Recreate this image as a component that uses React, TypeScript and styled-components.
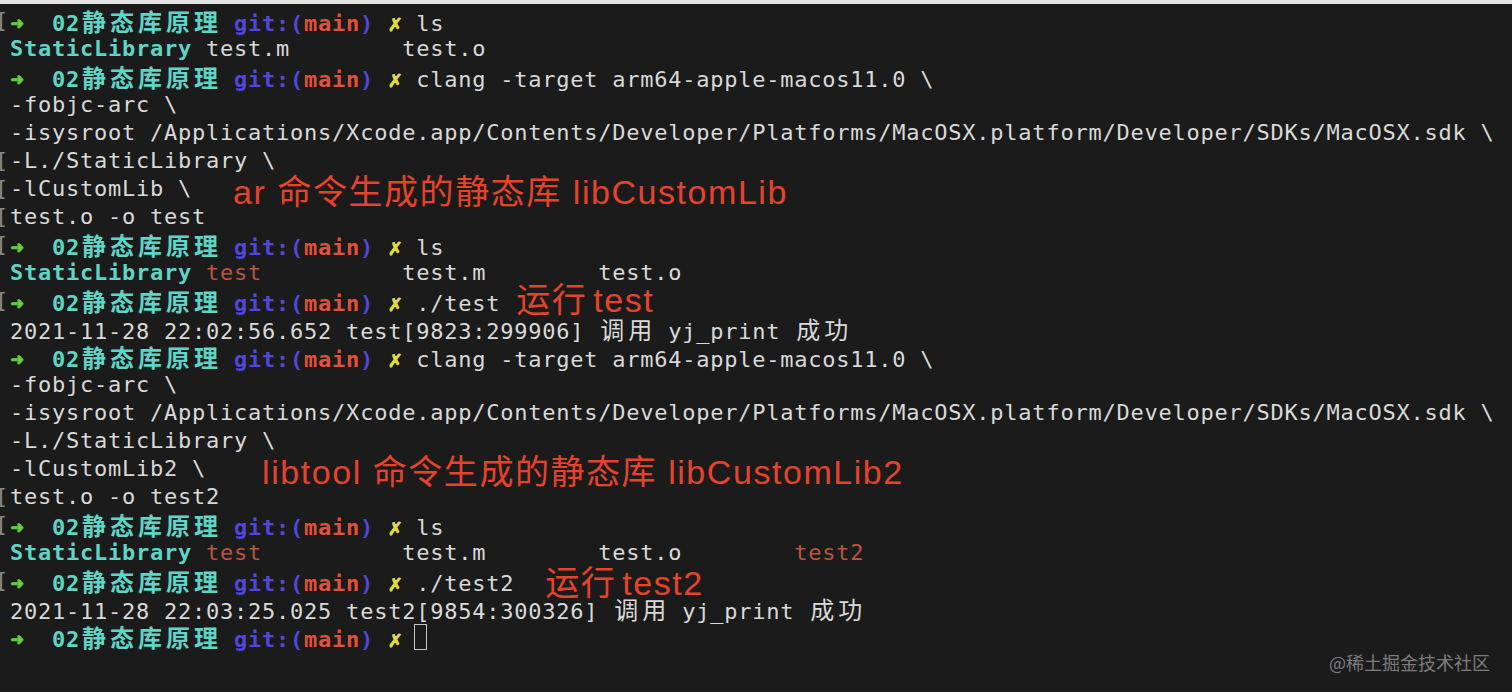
import React from "react";
import styled, { createGlobalStyle } from "styled-components";

type Tone = "arrow" | "dir" | "git" | "branch" | "dirty" | "cmd" | "exec";

interface Seg {
  text: string;
  tone?: Tone;
}

interface Note {
  text: string;
  gap: number;
  shift: number;
  tight?: boolean;
}

interface Line {
  mark?: boolean;
  segs: Seg[];
  note?: Note;
  cursor?: boolean;
}

const tones: Record<Tone, string> = {
  arrow: "#62cf3e",
  dir: "#5ed5c6",
  git: "#5048db",
  branch: "#e2503a",
  dirty: "#e2de3e",
  cmd: "#d9d9d9",
  exec: "#b9553f",
};

const heavy: Tone[] = ["arrow", "dir", "git", "branch", "dirty"];

const GlobalStyle = createGlobalStyle`
  html, body {
    margin: 0;
    padding: 0;
    background: #1b1b1b;
  }
`;

const Screen = styled.div`
  position: relative;
  height: 692px;
  box-sizing: border-box;
  overflow: hidden;
  background: #1b1b1b;
  border-top: 4px solid #e3e3e3;
  padding-top: 3px;
`;

const Terminal = styled.div`
  display: flex;
  flex-direction: column;
  font-family: "DejaVu Sans Mono", "Liberation Mono", monospace;
  font-size: 22px;
  letter-spacing: 0.76px;
  color: #d9d9d9;
`;

const Row = styled.div`
  height: 28px;
  line-height: 28px;
  white-space: pre;
`;

const Gutter = styled.span`
  display: inline-block;
  width: 10px;
  height: 28px;
  overflow: hidden;
  vertical-align: top;
  color: #8a8a8a;
`;

const Bracket = styled.span`
  display: inline-block;
  margin-left: -5px;
`;

const Text = styled.span<{ $tone: Tone }>`
  color: ${(p) => tones[p.$tone]};
  font-weight: ${(p) => (heavy.includes(p.$tone) ? 700 : 400)};
`;

const Wide = styled.span`
  display: inline-block;
  width: 28px;
  text-align: center;
  letter-spacing: 0;
  font-family: "Noto Sans CJK SC", sans-serif;
  font-size: 24px;
`;

// ➜ and ✗ take one cell; thicken them a bit like the terminal does
const Narrow = styled.span`
  display: inline-block;
  width: 14px;
  text-align: center;
  letter-spacing: 0;
  -webkit-text-stroke: 0.9px currentColor;
`;

const Cursor = styled.span`
  display: inline-block;
  box-sizing: border-box;
  width: 13px;
  height: 26px;
  margin: 1px 0 0 -2px;
  vertical-align: top;
  border: 1.5px solid #c4c4c4;
`;

const Annotation = styled.span<{ $gap: number; $shift: number; $tight?: boolean }>`
  display: inline-block;
  height: 28px;
  vertical-align: top;
  margin-left: ${(p) => p.$gap}px;
  margin-top: ${(p) => p.$shift}px;
  font-family: "Liberation Sans", "Noto Sans CJK SC", sans-serif;
  font-size: 34px;
  line-height: 34px;
  letter-spacing: 1.55px;
  word-spacing: ${(p) => (p.$tight ? "-5px" : "0")};
  color: #e5432b;
`;

const Watermark = styled.div`
  position: absolute;
  right: 22px;
  bottom: 18px;
  font-family: "Noto Sans CJK SC", sans-serif;
  font-size: 18px;
  line-height: 24px;
  color: #7c7c7c;
`;

const cjk = /[\u3000-\u9fff\uff00-\uffef]/;

function cells(text: string) {
  const out: React.ReactNode[] = [];
  let run = "";
  const flush = () => {
    if (run) out.push(run);
    run = "";
  };
  Array.from(text).forEach((ch, i) => {
    if (cjk.test(ch)) {
      flush();
      out.push(<Wide key={i}>{ch}</Wide>);
    } else if (ch === "➜" || ch === "✗") {
      flush();
      out.push(<Narrow key={i}>{ch}</Narrow>);
    } else {
      run += ch;
    }
  });
  flush();
  return out;
}

const prompt = (cmd: string): Seg[] => [
  { text: "➜", tone: "arrow" },
  { text: "  " },
  { text: "02静态库原理", tone: "dir" },
  { text: " " },
  { text: "git:(", tone: "git" },
  { text: "main", tone: "branch" },
  { text: ")", tone: "git" },
  { text: " " },
  { text: "✗", tone: "dirty" },
  { text: cmd ? " " + cmd : " " },
];

const plain = (text: string): Seg[] => [{ text }];

const sdk =
  "-isysroot /Applications/Xcode.app/Contents/Developer/Platforms/MacOSX.platform/Developer/SDKs/MacOSX.sdk \\";

const lines: Line[] = [
  { mark: true, segs: prompt("ls") },
  { segs: [{ text: "StaticLibrary", tone: "dir" }, { text: " test.m        test.o" }] },
  { segs: prompt("clang -target arm64-apple-macos11.0 \\") },
  { segs: plain("-fobjc-arc \\") },
  { segs: plain(sdk) },
  { mark: true, segs: plain("-L./StaticLibrary \\") },
  {
    mark: true,
    segs: plain("-lCustomLib \\"),
    note: { text: "ar 命令生成的静态库 libCustomLib", gap: 41, shift: 0 },
  },
  { mark: true, segs: plain("test.o -o test") },
  { mark: true, segs: prompt("ls") },
  {
    segs: [
      { text: "StaticLibrary", tone: "dir" },
      { text: " " },
      { text: "test", tone: "exec" },
      { text: "          test.m        test.o" },
    ],
  },
  {
    mark: true,
    segs: prompt("./test"),
    note: { text: "运行 test", gap: 16, shift: -4, tight: true },
  },
  { segs: plain("2021-11-28 22:02:56.652 test[9823:299906] 调用 yj_print 成功") },
  { segs: prompt("clang -target arm64-apple-macos11.0 \\") },
  { segs: plain("-fobjc-arc \\") },
  { segs: plain(sdk) },
  { segs: plain("-L./StaticLibrary \\") },
  {
    segs: plain("-lCustomLib2 \\"),
    note: { text: "libtool 命令生成的静态库 libCustomLib2", gap: 56, shift: 0 },
  },
  { mark: true, segs: plain("test.o -o test2") },
  { mark: true, segs: prompt("ls") },
  {
    segs: [
      { text: "StaticLibrary", tone: "dir" },
      { text: " " },
      { text: "test", tone: "exec" },
      { text: "          test.m        test.o        " },
      { text: "test2", tone: "exec" },
    ],
  },
  {
    mark: true,
    segs: prompt("./test2"),
    note: { text: "运行 test2", gap: 31, shift: -1, tight: true },
  },
  { segs: plain("2021-11-28 22:03:25.025 test2[9854:300326] 调用 yj_print 成功") },
  { segs: prompt(""), cursor: true },
];

const TerminalLine: React.FC<{ line: Line }> = ({ line }) => (
  <Row>
    <Gutter>{line.mark && <Bracket>[</Bracket>}</Gutter>
    {line.segs.map((s, i) => (
      <Text key={i} $tone={s.tone ?? "cmd"}>
        {cells(s.text)}
      </Text>
    ))}
    {line.cursor && <Cursor />}
    {line.note && (
      <Annotation $gap={line.note.gap} $shift={line.note.shift} $tight={line.note.tight}>
        {line.note.text}
      </Annotation>
    )}
  </Row>
);

export default function App() {
  return (
    <>
      <GlobalStyle />
      <Screen>
        <Terminal>
          {lines.map((line, i) => (
            <TerminalLine key={i} line={line} />
          ))}
        </Terminal>
        <Watermark>@稀土掘金技术社区</Watermark>
      </Screen>
    </>
  );
}
